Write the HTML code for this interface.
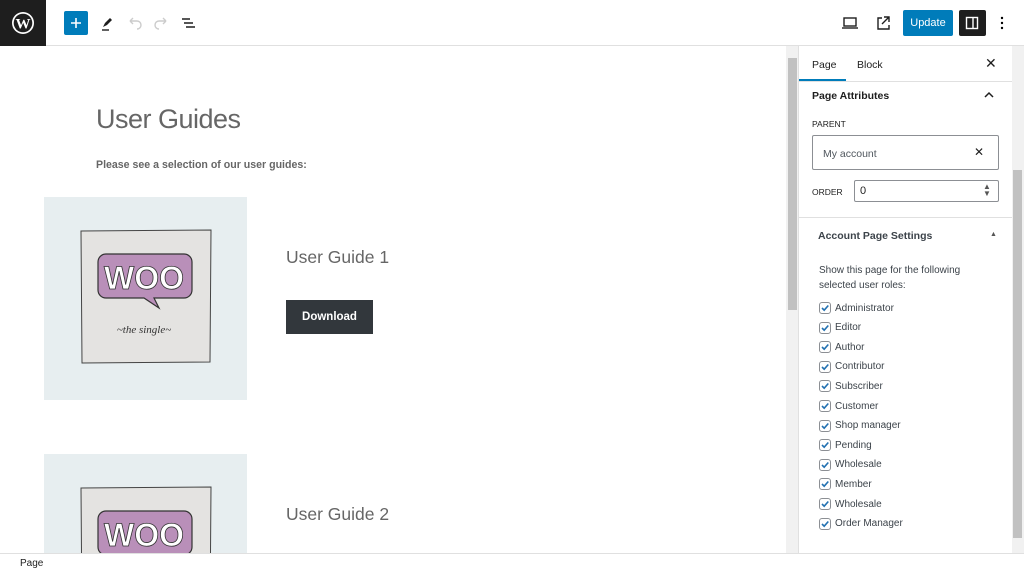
<!DOCTYPE html>
<html><head><style>
*{box-sizing:border-box;margin:0;padding:0}
html,body{width:1024px;height:572px;overflow:hidden}
body{background:#fff;font-family:"Liberation Sans",sans-serif;color:#1e1e1e;position:relative}
.a{position:absolute}
.top{left:0;top:0;width:1024px;height:46px;border-bottom:1px solid #e0e0e0;background:#fff}
.cb{position:absolute;left:819px;width:12px;height:12px;border:1px solid #8c8f94;border-radius:3px;background:#fff}
.cb svg{position:absolute;left:0;top:0}
.lbl{position:absolute;left:835px;font-size:10px;color:#3c434a}
.woo{position:absolute;background:#e7eef0;width:203px;height:203px;overflow:hidden}
</style></head><body>
<div class="a top"></div>
<div class="a" style="left:0;top:0;width:46px;height:46px;background:#1e1e1e"></div>
<svg class="a" style="left:11px;top:11px" width="24" height="24" viewBox="0 0 24 24"><circle cx="12" cy="12" r="11" fill="#fff"/><circle cx="12" cy="12" r="9.3" fill="#1e1e1e"/><text x="12" y="17.5" font-family="Liberation Serif" font-weight="bold" font-size="15" fill="#fff" text-anchor="middle">W</text></svg>
<div class="a" style="left:64px;top:11px;width:24px;height:24px;background:#007cba;border-radius:2px"></div>
<svg class="a" style="left:64px;top:11px" width="24" height="24"><path d="M12 7v10M7 12h10" stroke="#fff" stroke-width="1.6"/></svg>
<svg class="a" style="left:98px;top:13px" width="20" height="20"><path d="M5 14l2-4 5-5 2 2-5 5z" fill="#1e1e1e"/><path d="M4 17h7" stroke="#1e1e1e" stroke-width="1.4"/></svg>
<svg class="a" style="left:125px;top:13px" width="20" height="20"><path d="M5 8h7a4 4 0 0 1 0 8M5 8l3-3M5 8l3 3" stroke="#ccc" stroke-width="1.4" fill="none"/></svg>
<svg class="a" style="left:151px;top:13px" width="20" height="20"><path d="M15 8H8a4 4 0 0 0 0 8M15 8l-3-3M15 8l-3 3" stroke="#ccc" stroke-width="1.4" fill="none"/></svg>
<svg class="a" style="left:178px;top:13px" width="20" height="20"><path d="M4 6h8M6 10h9M8 14h9" stroke="#1e1e1e" stroke-width="1.5"/></svg>
<svg class="a" style="left:840px;top:13px" width="20" height="20"><rect x="4" y="5" width="12" height="8" fill="none" stroke="#1e1e1e" stroke-width="1.4"/><path d="M2 15h16" stroke="#1e1e1e" stroke-width="1.4"/></svg>
<svg class="a" style="left:873px;top:13px" width="20" height="20"><path d="M9 5H5v11h11v-4M11 4h5v5M16 4l-7 7" stroke="#1e1e1e" stroke-width="1.4" fill="none"/></svg>
<div class="a" style="left:903px;top:10px;width:50px;height:26px;background:#007cba;border-radius:2px;color:#fff;font-size:11px;text-align:center;line-height:26px">Update</div>
<div class="a" style="left:959px;top:10px;width:27px;height:26px;background:#1e1e1e;border-radius:2px"></div>
<svg class="a" style="left:962px;top:13px" width="20" height="20"><rect x="4.5" y="4.5" width="11" height="11" fill="none" stroke="#fff" stroke-width="1.4"/><path d="M11 4.5v11" stroke="#fff" stroke-width="1.4"/></svg>
<svg class="a" style="left:994px;top:13px" width="16" height="20"><circle cx="8" cy="5" r="1.2"/><circle cx="8" cy="10" r="1.2"/><circle cx="8" cy="15" r="1.2"/></svg>

<div class="a" style="left:96px;top:104px;font-size:27px;color:#666;letter-spacing:-0.5px">User Guides</div>
<div class="a" style="left:96px;top:159px;font-size:10.6px;color:#666;font-weight:bold">Please see a selection of our user guides:</div>
<div class="woo" style="left:44px;top:197px"></div>
<svg class="a" style="left:44px;top:197px" width="203" height="203"><path d="M37 34L167 33 166 165 38 166Z" fill="#e4e3e1" stroke="#444" stroke-width="1"/><path d="M62 57h78a8 8 0 0 1 8 8v28a8 8 0 0 1-8 8h-30l5 10-15-10H62a8 8 0 0 1-8-8V65a8 8 0 0 1 8-8z" fill="#b98fb9" stroke="#333" stroke-width="1.2"/><text x="100" y="92" font-family="Liberation Sans" font-weight="bold" font-size="32" fill="#fff" stroke="#333" stroke-width="0.8" text-anchor="middle">WOO</text><text x="100" y="136" font-family="Liberation Serif" font-style="italic" font-size="11" fill="#333" text-anchor="middle">~the   single~</text></svg>
<div class="a" style="left:286px;top:247px;font-size:17.5px;color:#666">User Guide 1</div>
<div class="a" style="left:286px;top:300px;width:87px;height:34px;background:#32373c;color:#fff;font-size:11.5px;font-weight:bold;text-align:center;line-height:34px">Download</div>
<div class="woo" style="left:44px;top:454px;height:99px"></div>
<svg class="a" style="left:44px;top:454px" width="203" height="99"><path d="M37 34L167 33 166 165 38 166Z" fill="#e4e3e1" stroke="#444" stroke-width="1"/><path d="M62 57h78a8 8 0 0 1 8 8v28a8 8 0 0 1-8 8H62a8 8 0 0 1-8-8V65a8 8 0 0 1 8-8z" fill="#b98fb9" stroke="#333" stroke-width="1.2"/><text x="100" y="92" font-family="Liberation Sans" font-weight="bold" font-size="32" fill="#fff" stroke="#333" stroke-width="0.8" text-anchor="middle">WOO</text></svg>
<div class="a" style="left:286px;top:504px;font-size:17.5px;color:#666">User Guide 2</div>

<div class="a" style="left:786px;top:46px;width:12px;height:507px;background:#f1f1f1"></div>
<div class="a" style="left:788px;top:58px;width:9px;height:252px;background:#c1c1c1"></div>
<div class="a" style="left:798px;top:46px;width:1px;height:507px;background:#e0e0e0"></div>

<div class="a" style="left:812px;top:59px;font-size:10.5px">Page</div>
<div class="a" style="left:857px;top:59px;font-size:10.5px">Block</div>
<div class="a" style="left:799px;top:79px;width:47px;height:2px;background:#007cba"></div>
<div class="a" style="left:985px;top:55px;font-size:14px">✕</div>
<div class="a" style="left:799px;top:81px;width:213px;height:1px;background:#e0e0e0"></div>
<div class="a" style="left:812px;top:90px;font-size:10.5px;font-weight:bold;color:#1e1e1e">Page Attributes</div>
<svg class="a" style="left:983px;top:89px" width="12" height="12"><path d="M2 8l4-4 4 4" stroke="#1e1e1e" stroke-width="1.5" fill="none"/></svg>
<div class="a" style="left:812px;top:119px;font-size:8.5px">PARENT</div>
<div class="a" style="left:812px;top:135px;width:187px;height:35px;border:1px solid #8c8f94;border-radius:2px"></div>
<div class="a" style="left:823px;top:148px;font-size:10.5px;color:#50575e">My account</div>
<div class="a" style="left:974px;top:145px;font-size:12px">✕</div>
<div class="a" style="left:812px;top:187px;font-size:8.5px">ORDER</div>
<div class="a" style="left:854px;top:180px;width:145px;height:22px;border:1px solid #8c8f94;border-radius:2px"></div>
<div class="a" style="left:860px;top:185px;font-size:11px">0</div>
<div class="a" style="left:983px;top:183px;font-size:8px;line-height:7px;color:#555">▲<br>▼</div>
<div class="a" style="left:799px;top:217px;width:213px;height:1px;background:#e0e0e0"></div>
<div class="a" style="left:818px;top:230px;font-size:10.5px;font-weight:bold;color:#3c434a">Account Page Settings</div>
<div class="a" style="left:990px;top:231px;font-size:7px;color:#555">▲</div>
<div class="a" style="left:819px;top:263px;font-size:10px;color:#3c434a;line-height:15px;width:170px">Show this page for the following selected user roles:</div>
<div id="cbs"></div>
<script>
var n=["Administrator","Editor","Author","Contributor","Subscriber","Customer","Shop manager","Pending","Wholesale","Member","Wholesale","Order Manager"],h="";
n.forEach(function(t,i){var y=302+i*19.6;h+='<div class="cb" style="top:'+y+'px"><svg width="10" height="10"><path d="M2 5l2.2 2.2L8.3 2.5" stroke="#2271b1" stroke-width="1.6" fill="none"/></svg></div><div class="lbl" style="top:'+(y+0.5)+'px">'+t+'</div>';});
document.getElementById("cbs").innerHTML=h;
</script>
<div class="a" style="left:1012px;top:46px;width:12px;height:507px;background:#f1f1f1"></div>
<div class="a" style="left:1013px;top:170px;width:9px;height:368px;background:#c1c1c1"></div>

<div class="a" style="left:0;top:553px;width:1024px;height:19px;border-top:1px solid #e0e0e0;background:#fff"></div>
<div class="a" style="left:20px;top:558px;font-size:10px">Page</div>
</body></html>
